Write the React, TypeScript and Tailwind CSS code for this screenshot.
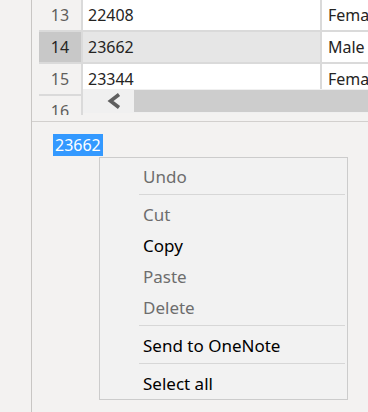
import React from 'react';

const rows = [
  { n: 13, id: '22408', g: 'Female' },
  { n: 14, id: '23662', g: 'Male', sel: true },
  { n: 15, id: '23344', g: 'Female' },
];

type Item = { label: string; off?: boolean } | 'sep';

const menu: Item[] = [
  { label: 'Undo', off: true },
  'sep',
  { label: 'Cut', off: true },
  { label: 'Copy' },
  { label: 'Paste', off: true },
  { label: 'Delete', off: true },
  'sep',
  { label: 'Send to OneNote' },
  'sep',
  { label: 'Select all' },
];

const ContextMenu: React.FC = () => (
  <div className="absolute left-[67px] top-[35px] w-[249px] border border-[#cccccc] bg-[#f2f2f2] pt-[3px]">
    {menu.map((it, i) =>
      it === 'sep' ? (
        <div key={i} className="h-[7px] pt-[2px] pl-[39px] pr-[2px]">
          <div className="h-px bg-[#d7d7d7]" />
        </div>
      ) : (
        <div
          key={i}
          className={`h-[31px] flex items-center pl-[43px] text-[17px] ${it.off ? 'text-[#6d6d6d]' : 'text-black'}`}
        >
          {it.label}
        </div>
      )
    )}
  </div>
);

export default function App() {
  return (
    <div className="w-[368px] h-[412px] bg-[#f3f2f1] flex overflow-hidden font-['Noto_Sans',sans-serif]">
      <div className="w-[31px] shrink-0" />
      <div className="w-px shrink-0 bg-[#c8c6c4]" />

      <div className="flex-1 min-w-0 flex flex-col">
        {/* table */}
        <div className="h-[122px] shrink-0 flex items-start pl-[7px] border-b border-[#d2d0ce]">
          <div className="w-[44px] h-[115px] shrink-0 flex flex-col gap-[2px] bg-[#dadada] pr-[2px] overflow-hidden">
            {rows.map((r) => (
              <div
                key={r.n}
                className={`h-[30px] shrink-0 flex items-center justify-center text-[16px] ${r.sel ? 'bg-[#c8c8c8] text-[#252423]' : 'bg-[#f3f2f1] text-[#605e5c]'}`}
              >
                {r.n}
              </div>
            ))}
            <div className="h-[30px] shrink-0 flex items-center justify-center text-[16px] bg-[#f3f2f1] text-[#605e5c]">
              16
            </div>
          </div>

          <div className="flex-1 min-w-0 h-[113px] flex flex-col">
            <div className="h-[89px] overflow-hidden flex flex-col gap-[2px] bg-[#dadada]">
              {rows.map((r) => (
                <div key={r.n} className="h-[30px] shrink-0 grid grid-cols-[237px_1fr] gap-[2px] text-[16px] text-[#252423]">
                  <div className={`flex items-center pl-[5px] ${r.sel ? 'bg-[#e6e6e6]' : 'bg-white'}`}>{r.id}</div>
                  <div className="flex items-center pl-[6px] bg-white whitespace-nowrap">{r.g}</div>
                </div>
              ))}
            </div>
            {/* horizontal scrollbar */}
            <div className="h-[24px] flex items-center bg-[#f0f0f0]">
              <div className="w-[51px] h-full flex items-center pl-[24px]">
                <svg width="14" height="16" viewBox="0 0 14 16">
                  <polyline points="12,1.5 3.5,8 12,14.5" fill="none" stroke="#5f5f5f" strokeWidth="3.6" />
                </svg>
              </div>
              <div className="flex-1 h-[22px] bg-[#cdcdcd]" />
            </div>
          </div>
        </div>

        {/* text box + context menu */}
        <div className="flex-1 relative pt-[11px] pl-[21px]">
          <span className="inline-block h-[22px] leading-[22px] px-[2px] bg-[#3399ff] text-white text-[16px]">23662</span>
          <ContextMenu />
        </div>
      </div>
    </div>
  );
}
